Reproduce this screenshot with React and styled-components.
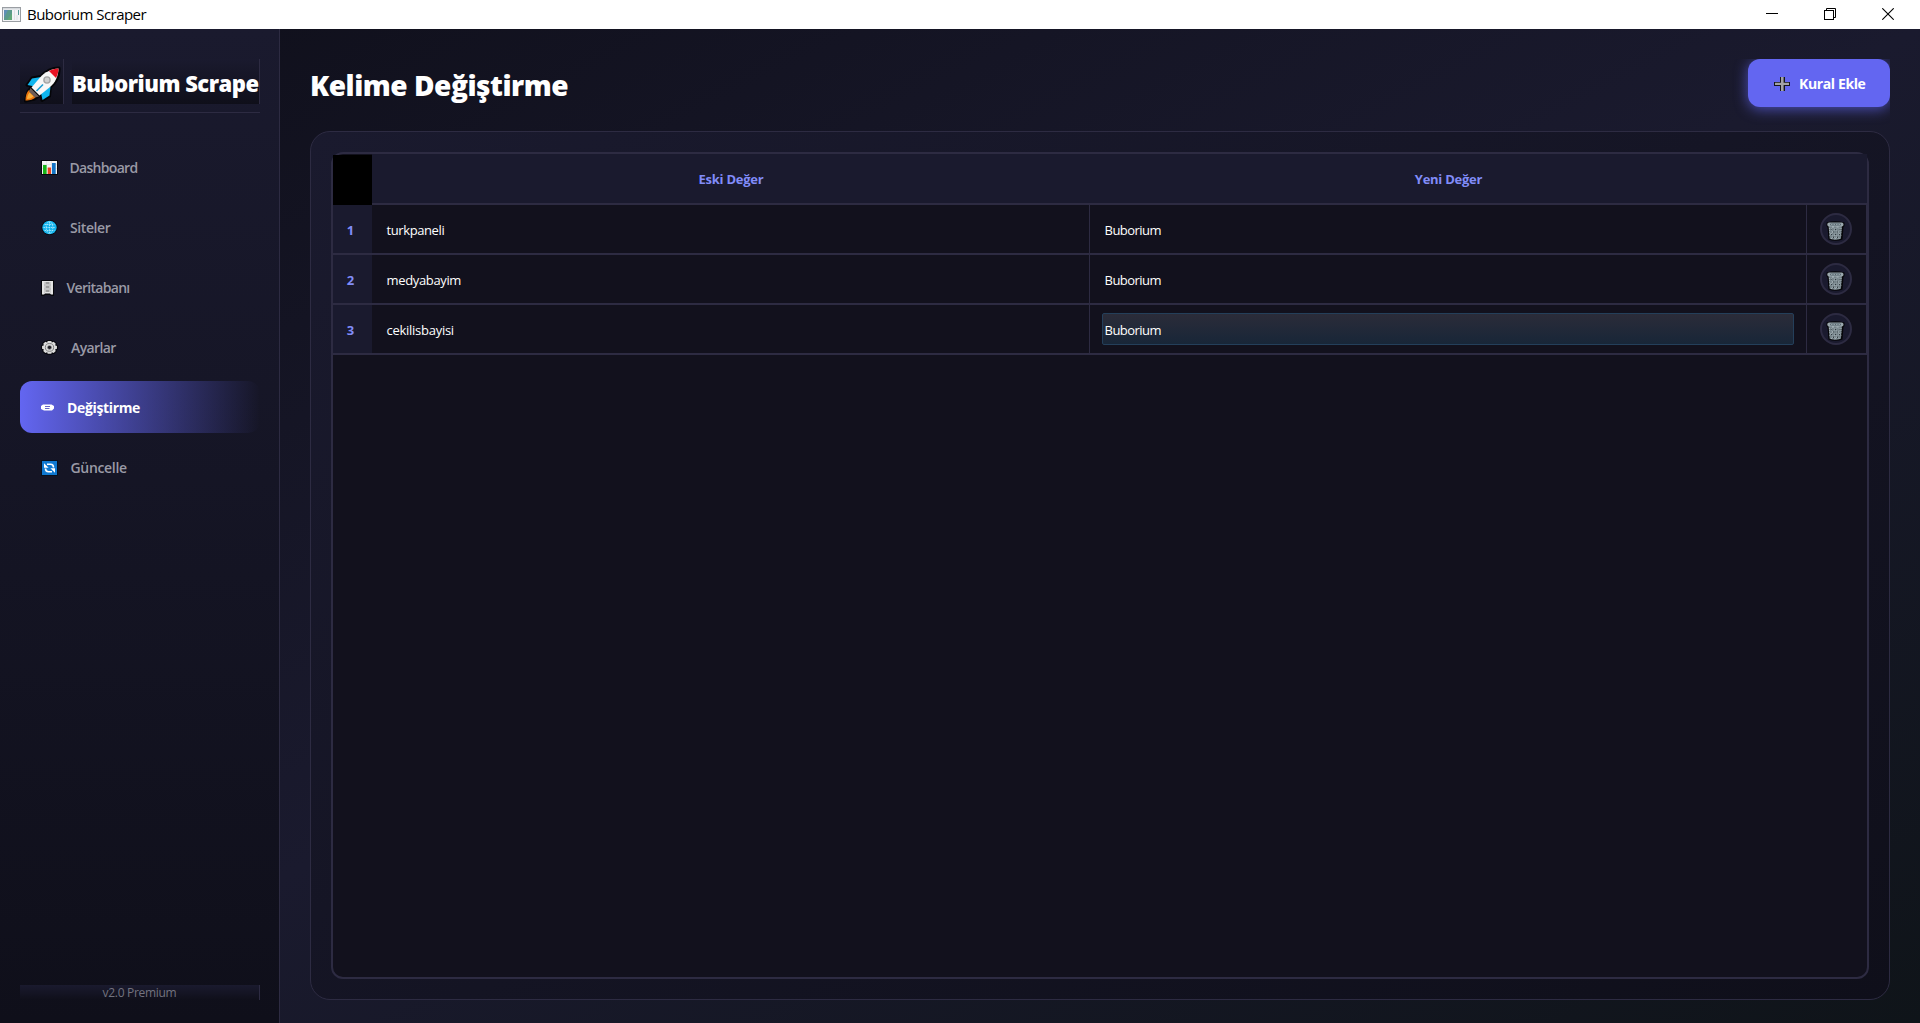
import React from 'react';
import styled, { createGlobalStyle, css } from 'styled-components';

const line = '#2d2b42';

const GlobalStyle = createGlobalStyle`
  * { box-sizing: border-box; }
  body { margin: 0; background: #0f0f1a; }
  body, button { font-family: "Open Sans", "Noto Sans", sans-serif; }
`;

const Window = styled.div`
  display: flex;
  flex-direction: column;
  height: 100vh;
  overflow: hidden;
  color: #fff;
`;

const TitleBar = styled.header`
  display: flex;
  align-items: center;
  height: 29px;
  flex: none;
  padding: 0 0 1px 2px;
  background: #fff;
  color: #000;
`;

const WindowTitle = styled.span`
  flex: 1;
  margin-left: 6px;
  font-size: 15px;
  line-height: 20px;
  letter-spacing: -0.53px;
`;

const WindowButton = styled.span`
  display: flex;
  justify-content: center;
  width: ${(p) => p.$width || 59}px;
  margin-right: ${(p) => p.$gap || 0}px;
`;

const Body = styled.div`
  display: flex;
  flex: 1;
  min-height: 0;
  background: linear-gradient(to bottom right, #0f0f1a, #1a1a2e 50%, #0f1419);
`;

const Sidebar = styled.aside`
  display: flex;
  flex-direction: column;
  width: 280px;
  flex: none;
  padding: 30px 19px 23px 20px;
  border-right: 1px solid ${line};
  background: linear-gradient(#1a1a2e, #0f0f1a);
`;

const sidebarLabel = css`
  border-right: 1px solid ${line};
  background: linear-gradient(#1a1a2e, #0f0f1a);
`;

const Brand = styled.div`
  display: flex;
  gap: 8px;
  height: 54px;
  width: 240px;
  padding-bottom: 8px;
  border-bottom: 1px solid ${line};
`;

const BrandLogo = styled.div`
  ${sidebarLabel}
  display: flex;
  width: 44px;
  flex: none;
  padding: 6px 0 0 3px;
`;

const BrandName = styled.div`
  ${sidebarLabel}
  flex: 1;
  white-space: nowrap;
  padding-top: 3px;
  font-size: 22px;
  font-weight: 800;
  line-height: 42px;
  letter-spacing: -0.5px;
`;

const Nav = styled.nav`
  display: flex;
  flex-direction: column;
  flex: 1;
  gap: 8px;
  margin-top: 28px;
`;

const NavItem = styled.a`
  display: flex;
  align-items: center;
  height: 52px;
  padding: 1px 0 0 21px;
  border-radius: 12px;
  font-size: 14px;
  font-weight: ${(p) => (p.$active ? 700 : 600)};
  letter-spacing: ${(p) => p.$tracking}px;
  color: ${(p) => (p.$active ? '#fff' : '#9a9aa6')};
  background: ${(p) => (p.$active ? 'linear-gradient(90deg, #6366f1, rgba(99, 102, 241, 0))' : 'none')};
`;

const NavIcon = styled.span`
  display: flex;
  width: ${(p) => p.$width}px;
`;

const Version = styled.div`
  ${sidebarLabel}
  height: 15px;
  width: 240px;
  font-size: 12px;
  line-height: 15px;
  letter-spacing: -0.3px;
  text-align: center;
  color: #73737f;
`;

const Main = styled.main`
  display: flex;
  flex-direction: column;
  flex: 1;
  gap: 24px;
  min-width: 0;
  padding: 30px 30px 23px;
`;

const PageHeader = styled.div`
  display: flex;
  align-items: center;
  justify-content: space-between;
  height: 48px;
  flex: none;
`;

const PageTitle = styled.h1`
  margin: 0;
  padding-top: 3px;
  font-size: 28px;
  font-weight: 800;
  line-height: 40px;
  letter-spacing: -0.47px;
`;

const AddButton = styled.button`
  display: flex;
  align-items: center;
  gap: 9px;
  width: 142px;
  height: 48px;
  padding: 1px 0 0 26px;
  border: 0;
  border-radius: 12px;
  background: #6366f1;
  color: #fff;
  font-size: 14px;
  font-weight: 700;
  letter-spacing: -0.38px;
  white-space: nowrap;
  box-shadow: 0 2px 14px rgba(99, 102, 241, 0.7);
  clip-path: inset(0 0 -24px -24px);
`;

const Card = styled.section`
  display: flex;
  flex: 1;
  min-height: 0;
  padding: 20px;
  border: 1px solid ${line};
  border-radius: 20px;
  background: linear-gradient(to bottom right, #1a1a2e, #0f0f1a);
`;

const Table = styled.div`
  flex: 1;
  padding-top: 1px;
  border: 2px solid ${line};
  border-radius: 12px;
  background: #12111d;
`;

const Row = styled.div`
  display: grid;
  grid-template-columns: 39px 718px 717px 60px;
  height: 50px;
`;

const HeadCell = styled.div`
  display: flex;
  align-items: center;
  justify-content: center;
  margin-top: -1px;
  padding-top: 1px;
  border-bottom: 2px solid ${line};
  background: #1a1a2e;
  color: #818cf8;
  font-size: 13px;
  font-weight: 700;
  letter-spacing: -0.25px;
`;

const Corner = styled.div`
  background: #000;
`;

const RowNumber = styled.div`
  display: flex;
  align-items: center;
  justify-content: center;
  padding: 2px 4px 0 0;
  border-bottom: 2px solid ${line};
  background: #1a1a2e;
  color: #818cf8;
  font-size: 13px;
  font-weight: 700;
`;

const Cell = styled.div`
  display: flex;
  align-items: center;
  padding: ${(p) => (p.$padding || '0 12px')};
  border-right: 1px solid ${line};
  border-bottom: 2px solid ${line};
  font-size: 13px;
`;

const Value = styled.span`
  flex: 1;
  height: 32px;
  padding: ${(p) => (p.$selected ? '1px 0 0 1.5px' : '2px 0 0 2.5px')};
  line-height: 30px;
  letter-spacing: ${(p) => p.$tracking}px;
  border-radius: 2px;
  ${(p) =>
    p.$selected &&
    css`
      border: 1px solid #243f5a;
      background: linear-gradient(#2b2c39, #182638);
    `}
`;

const DeleteButton = styled.button`
  display: flex;
  align-items: center;
  justify-content: center;
  width: 32px;
  height: 32px;
  padding: 3px 1px 0 0;
  border: 2px solid ${line};
  border-radius: 50%;
  background: #1a1a2e;
`;

const AppIcon = () => (
  <svg width="19" height="15" viewBox="0 0 19 15">
    <rect x=".5" y=".5" width="18" height="14" fill="#f4f4f6" stroke="#9a9ea3" />
    <rect x="1" y="1" width="17" height="1.5" fill="#d5d9dd" />
    <rect x="2" y="3" width="8" height="10" fill="#5b9a8b" />
    <path d="M2 3h4L2 11z" fill="#5f8fb5" />
    <path d="M5 13l5-7v7z" fill="#62a878" />
    <path d="M12.5 3v10M15 8v5" stroke="#dfe2e6" />
    <path d="M16.5 3v5" stroke="#5a9c9a" />
  </svg>
);

const Rocket = () => (
  <svg width="38" height="38" viewBox="0 0 38 38">
    <g stroke="#050508" strokeWidth="3" strokeLinejoin="round">
      <path d="M36 3C30 3 23 6 18 11.500L9 13 4 20l5 1.500-4 5L2.500 36l9-2 6-4.500 1.500 6 7.500-4.500 1-9c6-5 9-12 8.500-19z" />
    </g>
    <path d="M18 12L9 13.500 4.500 20l7 1.500zM27.500 21.500l-1 9-7 4.500-1.500-7z" fill="#0fb5ee" />
    <path d="M6 25c-2.500 2.500-3.500 6-3.500 10.500 4.500 0 8.500-1 10.500-4z" fill="#e8730c" />
    <path d="M6.500 27.500c-1.700 2-2.300 3.500-2.500 6.500 3 0 4.800-1 6.500-2.800z" fill="#fcb13c" />
    <path d="M7.500 23l8.500 8.500-4 1-6-6z" fill="#6d5d57" />
    <path d="M35.500 3.500C28 4 22 7 17 12.500L8.500 22.500l8 8 10-8c6-5 9-12 9-19z" fill="#f7f7f7" />
    <path d="M35.500 3.500c-3.500.2-6.500 1-9.500 2.500l7 7c1.500-3 2.500-6 2.500-9.500z" fill="#e81224" />
    <circle cx="24" cy="15" r="3.800" fill="#a4a4a4" />
    <circle cx="24" cy="15" r="2.400" fill="#cfcfcf" />
    <path d="M20 19.500L13.500 26" stroke="#1d9bd0" strokeWidth="1.600" />
  </svg>
);

const ChartIcon = () => (
  <svg width="17" height="15" viewBox="0 0 17 15">
    <rect width="17" height="15" fill="#07070c" />
    <rect x="1" y="1" width="15" height="13" fill="#f5f5f5" />
    <path d="M1 4.500h15M1 8.500h15M5.500 1v13M10.500 1v13" stroke="#dcdcdc" strokeWidth=".6" />
    <rect x="2" y="5" width="3.600" height="9" fill="#16b516" />
    <rect x="6.700" y="7.500" width="3.300" height="6.500" fill="#ea4321" />
    <rect x="11" y="3" width="3.700" height="11" fill="#1474c4" />
  </svg>
);

const GlobeIcon = () => (
  <svg width="17" height="15" viewBox="0 0 17 15">
    <ellipse cx="8.500" cy="7.500" rx="8" ry="7.500" fill="#06060c" />
    <ellipse cx="8.500" cy="7.500" rx="7.200" ry="6.700" fill="#14b4ee" />
    <g fill="none" stroke="#a6e6fb" strokeWidth=".9" strokeDasharray="1.600 .8">
      <path d="M3.500 4.500h10M2.500 7.500h12M3.500 10.500h10M8.500 2v11" />
      <ellipse cx="8.500" cy="7.500" rx="3.300" ry="6" />
    </g>
  </svg>
);

const CabinetIcon = () => (
  <svg width="13" height="16" viewBox="0 0 13 16">
    <path d="M0 0h13v16h-3l-1-1H4l-1 1H0z" fill="#07070c" />
    <path d="M1 1h11v13.500h-2l-1-1H4l-1 1H1z" fill="#e4e4e4" />
    <path d="M3.500 2v11M9.500 2v11" stroke="#bcbcbc" strokeWidth=".6" />
    <path d="M4.500 3h4M4.500 7h4M4.500 11h4" stroke="#555" strokeWidth="1.200" />
    <path d="M3.500 5h6M3.500 9h6" stroke="#8b8b8b" strokeWidth=".7" />
  </svg>
);

const gear = 'M6.300 1h3.400l.5 1.500 1.700-.7 2 2-.7 1.500 1.800.7v2.800l-1.800.6.7 1.600-2 2-1.700-.7-.5 1.500H6.300l-.5-1.500-1.700.7-2-2 .7-1.600L1 8.800V6l1.800-.7-.7-1.500 2-2 1.700.7z';
const GearIcon = () => (
  <svg width="17" height="15" viewBox="0 0 16 15" preserveAspectRatio="none">
    <path d={gear} fill="#06060c" stroke="#06060c" strokeWidth="2" strokeLinejoin="round" />
    <path d={gear} fill="#dcdcdc" />
    <circle cx="8" cy="7.400" r="3.900" fill="none" stroke="#777" strokeWidth=".9" />
    <circle cx="8" cy="7.400" r="2" fill="#1b1b22" stroke="#aaa" strokeWidth=".6" />
  </svg>
);

const PencilIcon = () => (
  <svg width="13" height="7" viewBox="0 0 13 7">
    <path d="M2 .5h8.500L13 2v2.500l-2 2H3L0 5V2z" fill="#fff" />
    <path d="M4 2.500h5M4 4.500h4.500" stroke="#5553c4" strokeWidth=".9" />
  </svg>
);

const RefreshIcon = () => (
  <svg width="17" height="16" viewBox="0 0 17 16">
    <rect width="17" height="16" fill="#06101f" />
    <rect x="1" y="1" width="15" height="14" fill="#0f78d0" />
    <path d="M6 4.300h3.500Q12.500 4.300 12.500 7.500M11 11.700H7.500Q4.500 11.700 4.500 8.500" fill="none" stroke="#fff" strokeWidth="1.600" />
    <path d="M3 3.200v4.600h4.600zM14 12.800V8.200H9.400z" fill="#fff" />
  </svg>
);

const PlusIcon = () => (
  <svg width="16" height="14" viewBox="0 0 16 14">
    <path d="M6 0h5v5h5v4h-5v5H6V9H0V5h6z" fill="#16161c" />
    <path d="M7 0h2.600v5.800H15v2.200H9.600V14H7V8H1V5.800h6z" fill="#a3a3a6" />
  </svg>
);

const TrashIcon = () => (
  <svg width="19" height="20" viewBox="0 0 19 20">
    <path d="M.5 1.500Q9 -1 18.500 1.500V5l-1 1-1 12.500q-7 2.500-14 0L1.500 6l-1-1z" fill="#050508" />
    <path d="M2.600 5h13.300l-1 12.700q-5.600 2-11.200 0z" fill="#76848a" />
    <g stroke="#b4c0c5" strokeWidth=".9" strokeDasharray="1.300 .7">
      <path d="M3 7l10.500 11M3.500 11.500l6.500 7M6 5l9 9.500M10.500 5l5 5M15.500 7L5 18M15 11.500L8.500 18.500M12.500 5l-9 9.500M8 5L3 10" />
    </g>
    <g fill="#323c41">
      <path d="M4.500 8h1v1h-1zM7 10.500h1v1H7zM11 10.500h1v1h-1zM9 8h1v1H9zM13.500 8h1v1h-1zM5 13h1v1H5zM9 13h1v1H9zM13 13h1v1h-1zM7 15.500h1v1.500H7zM11 15.500h1v1.500h-1z" />
    </g>
    <rect x="1.300" y="1.500" width="16.200" height="4" rx="1.800" fill="#9aa7ad" />
    <rect x="4" y="2.500" width="11" height="2" rx="1" fill="#53626a" />
    <path d="M5 3.500h9" stroke="#a5b2b8" strokeWidth=".8" strokeDasharray="1.500 1" />
  </svg>
);

const MinimizeIcon = () => (
  <svg width="12" height="12" viewBox="0 0 12 12"><path d="M0 5.500h12" stroke="#000" /></svg>
);
const RestoreIcon = () => (
  <svg width="12" height="12" viewBox="0 0 12 12" fill="none" stroke="#000">
    <rect x=".5" y="2.500" width="9" height="9" />
    <path d="M2.500 2.500v-2h9v9h-2" />
  </svg>
);
const CloseIcon = () => (
  <svg width="12" height="12" viewBox="0 0 12 12"><path d="M.3.3l11.400 11.400M11.700.3L.3 11.700" stroke="#000" strokeWidth="1.100" /></svg>
);

const navItems = [
  { label: 'Dashboard', Icon: ChartIcon, width: 28.5, tracking: -0.7 },
  { label: 'Siteler', Icon: GlobeIcon, width: 29, tracking: -0.4 },
  { label: 'Veritabanı', Icon: CabinetIcon, width: 25.5, tracking: -0.7 },
  { label: 'Ayarlar', Icon: GearIcon, width: 30, tracking: -0.6 },
  { label: 'Değiştirme', Icon: PencilIcon, width: 26, tracking: -0.35, active: true },
  { label: 'Güncelle', Icon: RefreshIcon, width: 29.5, tracking: -0.33 },
];

const rules = [
  { from: 'turkpaneli', tracking: -0.4, to: 'Buborium' },
  { from: 'medyabayim', tracking: -0.35, to: 'Buborium' },
  { from: 'cekilisbayisi', tracking: -0.27, to: 'Buborium', selected: true },
];

export default function App() {
  return (
    <Window>
      <GlobalStyle />
      <TitleBar>
        <AppIcon />
        <WindowTitle>Buborium Scraper</WindowTitle>
        <WindowButton><MinimizeIcon /></WindowButton>
        <WindowButton $width={57}><RestoreIcon /></WindowButton>
        <WindowButton $width={60} $gap={2}><CloseIcon /></WindowButton>
      </TitleBar>
      <Body>
        <Sidebar>
          <Brand>
            <BrandLogo><Rocket /></BrandLogo>
            <BrandName>Buborium Scrape</BrandName>
          </Brand>
          <Nav>
            {navItems.map(({ label, Icon, width, tracking, active }) => (
              <NavItem key={label} $active={active} $tracking={tracking}>
                <NavIcon $width={width}><Icon /></NavIcon>
                {label}
              </NavItem>
            ))}
          </Nav>
          <Version>v2.0 Premium</Version>
        </Sidebar>
        <Main>
          <PageHeader>
            <PageTitle>Kelime Değiştirme</PageTitle>
            <AddButton><PlusIcon />Kural Ekle</AddButton>
          </PageHeader>
          <Card>
            <Table>
              <Row>
                <Corner />
                <HeadCell>Eski Değer</HeadCell>
                <HeadCell>Yeni Değer</HeadCell>
                <HeadCell />
              </Row>
              {rules.map((rule, i) => (
                <Row key={rule.from}>
                  <RowNumber>{i + 1}</RowNumber>
                  <Cell>
                    <Value $tracking={rule.tracking}>{rule.from}</Value>
                  </Cell>
                  <Cell>
                    <Value $tracking={-0.52} $selected={rule.selected}>{rule.to}</Value>
                  </Cell>
                  <Cell $padding="0 0 0 13px">
                    <DeleteButton aria-label="Sil"><TrashIcon /></DeleteButton>
                  </Cell>
                </Row>
              ))}
            </Table>
          </Card>
        </Main>
      </Body>
    </Window>
  );
}
